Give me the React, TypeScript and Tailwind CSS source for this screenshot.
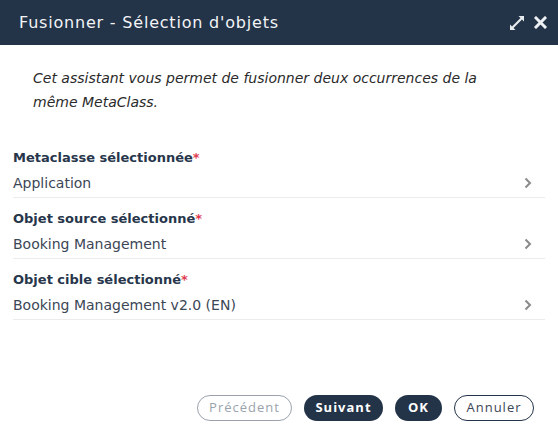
import React from "react";

const font = { fontFamily: '"DejaVu Sans", Verdana, sans-serif' };
const btnFont = { fontFamily: '"Open Sans", "DejaVu Sans", sans-serif' };

function Chevron() {
  return (
    <svg width="8" height="12" viewBox="0 0 8 12" className="shrink-0">
      <path d="M1.5 1.5 L6 6 L1.5 10.5" fill="none" stroke="#8a8a8a" strokeWidth="2" />
    </svg>
  );
}

function Field({ label, value }: { label: string; value: string }) {
  return (
    <div className="border-b border-[#ececec] pt-[11px] pb-[3px]">
      <div className="text-[13px] font-bold text-[#27364b] leading-[20px]">
        {label}
        <span className="text-[#e03c50]">*</span>
      </div>
      <div className="flex items-center justify-between h-[22px] mt-[4px] pr-[13px]">
        <span className="text-[14px] text-[#3b4656]">{value}</span>
        <Chevron />
      </div>
    </div>
  );
}

export default function App() {
  return (
    <div className="w-[558px] h-[434px] bg-white flex flex-col" style={font}>
      <div className="h-[45px] bg-[#233348] flex items-center justify-between pl-[19px] pr-[11px] shrink-0">
        <span className="text-[16px] text-[#f2f4f6] tracking-[0.8px]">Fusionner - Sélection d'objets</span>
        <div className="flex items-center gap-[9px]">
          <svg width="16" height="16" viewBox="0 0 16 16">
            <path d="M9.5 1 H15 V6.5 L13 4.5 L4.5 13 L6.5 15 H1 V9.5 L3 11.5 L11.5 3 Z" fill="#e8ebef" />
          </svg>
          <svg width="13" height="13" viewBox="0 0 13 13">
            <path d="M2 2 L11 11 M11 2 L2 11" stroke="#eef0f3" strokeWidth="3" strokeLinecap="square" />
          </svg>
        </div>
      </div>
      <div className="flex-1 flex flex-col px-[13px]">
        <p className="italic text-[14px] text-[#2a2a2a] leading-[24px] pl-[20px] pr-[30px] pt-[21px] pb-[23px]">
          Cet assistant vous permet de fusionner deux occurrences de la même MetaClass.
        </p>
        <Field label="Metaclasse sélectionnée" value="Application" />
        <Field label="Objet source sélectionné" value="Booking Management" />
        <Field label="Objet cible sélectionné" value="Booking Management v2.0 (EN)" />
        <div className="flex-1" />
        <div className="flex justify-end items-center gap-[12px] pb-[13px] pr-[11px]" style={btnFont}>
          <button className="h-[26px] w-[95px] rounded-full border border-[#9aa3ad] text-[13px] text-[#9aa3ad] tracking-[1px]">Précédent</button>
          <button className="h-[26px] w-[79px] rounded-full bg-[#233348] text-[13px] font-bold text-white tracking-[1px]">Suivant</button>
          <button className="h-[26px] w-[47px] rounded-full bg-[#233348] text-[13px] font-bold text-white tracking-[1px]">OK</button>
          <button className="h-[26px] w-[80px] rounded-full border border-[#233348] text-[13px] text-[#3b4656] tracking-[1px]">Annuler</button>
        </div>
      </div>
    </div>
  );
}
